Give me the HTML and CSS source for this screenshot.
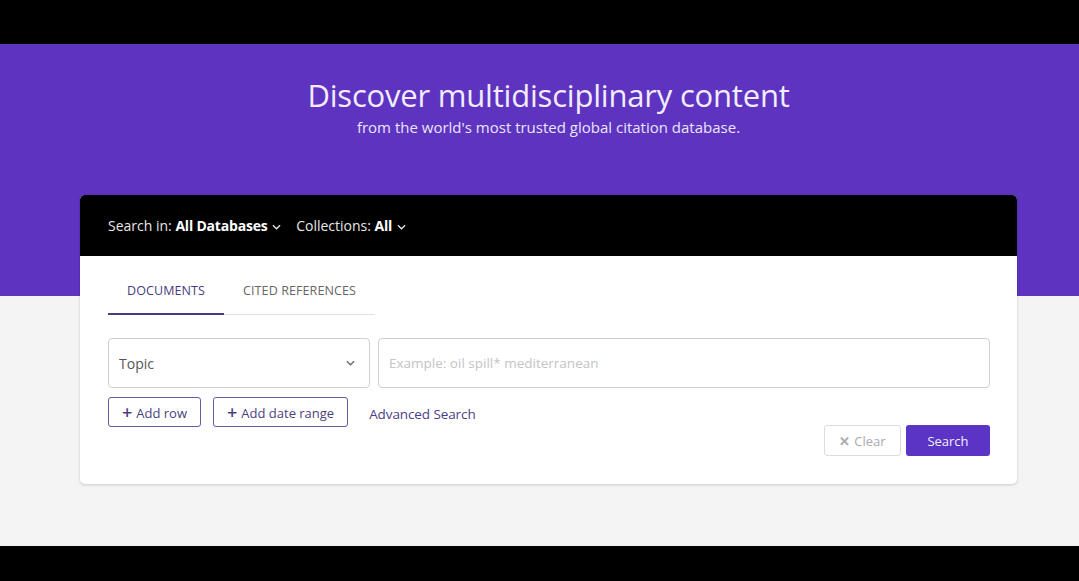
FILE: index.html
```html
<!DOCTYPE html>
<html lang="en">
<head>
  <meta charset="UTF-8">
  <meta name="viewport" content="width=device-width, initial-scale=1">
  <title>Discover multidisciplinary content</title>
  <link rel="stylesheet" href="styles.css">
</head>
<body>
  <div class="bar"></div>

  <section class="hero">
    <h1>Discover multidisciplinary content</h1>
    <p class="sub">from the world's most trusted global citation database.</p>
  </section>

  <main class="lower">
    <div class="card">
      <div class="card-head">
        <span class="pick">Search in: <b>All Databases</b>
          <svg class="caret" viewBox="0 0 10 6" width="9" height="6"><path d="M1 1l4 4 4-4" fill="none" stroke="currentColor" stroke-width="1.4"/></svg>
        </span>
        <span class="pick">Collections: <b>All</b>
          <svg class="caret" viewBox="0 0 10 6" width="9" height="6"><path d="M1 1l4 4 4-4" fill="none" stroke="currentColor" stroke-width="1.4"/></svg>
        </span>
      </div>

      <div class="card-body">
        <div class="tabs">
          <span class="tab active">DOCUMENTS</span>
          <span class="tab">CITED REFERENCES</span>
        </div>

        <div class="row">
          <div class="select">
            <span>Topic</span>
            <svg viewBox="0 0 10 6" width="9" height="6"><path d="M1 1l4 4 4-4" fill="none" stroke="#666" stroke-width="1.4"/></svg>
          </div>
          <input class="query" type="text" placeholder="Example: oil spill* mediterranean">
        </div>

        <div class="actions">
          <button type="button" class="outline"><span class="plus">+</span>Add row</button>
          <button type="button" class="outline"><span class="plus">+</span>Add date range</button>
          <a class="adv" href="#">Advanced Search</a>
        </div>

        <div class="submit">
          <button type="button" class="clear"><span class="x">&#x2715;</span>Clear</button>
          <button type="button" class="go">Search</button>
        </div>
      </div>
    </div>
  </main>

  <div class="bar bottom"></div>
</body>
</html>
```

FILE: styles.css
```css
body { margin: 0; font-family: "Open Sans", "Noto Sans", Arial, sans-serif; color: #333; background: #f4f4f4; }
.bar { height: 44px; background: #000; }
.bar.bottom { height: 35px; }

.hero { background: #5d33c0; height: 252px; text-align: center; color: #fff; padding: 32px 0 0 18px; box-sizing: border-box; }
.hero h1 { margin: 0; font-weight: 400; font-size: 31px; line-height: 38px; letter-spacing: -0.2px; color: #f1ecff; }
.hero .sub { margin: 3px 0 0; font-size: 15px; line-height: 20px; color: #ece6fb; }

.lower { height: 250px; position: relative; }
.card { position: relative; top: -101px; margin: 0 62px 0 80px; background: #fff; border-radius: 5px; box-shadow: 0 1px 3px rgba(0,0,0,0.18); overflow: hidden; }

.card-head { height: 61px; background: #000; color: #e8e8e8; display: flex; align-items: center; gap: 15px; padding: 0 28px; font-size: 14px; }
.card-head b { color: #fff; font-weight: 700; letter-spacing: -0.2px; }
.caret { margin-left: 1px; vertical-align: middle; }

.card-body { padding: 21px 27px 28px 28px; }
.tabs { display: flex; width: 267px; border-bottom: 1px solid #e2e2e2; }
.tab { font-size: 12.5px; padding: 5px 19px 14px; color: #666; letter-spacing: 0.1px; }
.tab.active { color: #4a3b7c; border-bottom: 2px solid #4a3b7c; margin-bottom: -1px; }

.row { display: flex; gap: 8px; margin-top: 23px; }
.select { width: 262px; height: 50px; box-sizing: border-box; border: 1px solid #cfcfcf; border-radius: 4px; display: flex; align-items: center; justify-content: space-between; padding: 0 14px 0 10px; font-size: 14px; color: #555; }
.query { flex: 1; height: 50px; box-sizing: border-box; border: 1px solid #cfcfcf; border-radius: 4px; padding: 0 10px; font: inherit; font-size: 13.5px; }
.query::placeholder { color: #c4c4c4; }

.actions { display: flex; align-items: center; gap: 12px; margin-top: 9px; }
.outline { height: 30px; background: #fff; border: 1px solid #6a5a9e; border-radius: 3px; color: #4c3f80; font: inherit; font-size: 13px; padding: 0 13px; cursor: pointer; }
.plus { font-size: 18px; font-weight: 600; margin-right: 4px; line-height: 1; vertical-align: -1px; }
.adv { color: #4b3d86; text-decoration: none; font-size: 13.5px; margin-left: 9px; padding-top: 4px; letter-spacing: -0.1px; }

.submit { display: flex; justify-content: flex-end; gap: 5px; margin-top: -2px; }
.submit button { height: 31px; border-radius: 3px; font: inherit; font-size: 13px; cursor: pointer; }
.clear { width: 77px; background: #fff; border: 1px solid #dcdcdc; color: #aaa; }
.clear .x { margin-right: 4px; font-weight: 700; }
.go { width: 84px; background: #5b34c6; border: none; color: #f2eeff; font-weight: 600; }
```
